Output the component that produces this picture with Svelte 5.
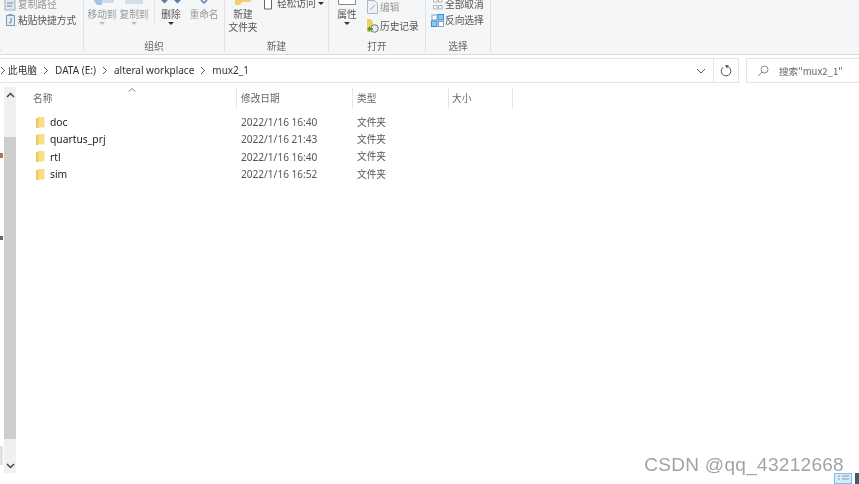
<script lang="ts">
	const files = [
		{ name: 'doc', date: '2022/1/16 16:40' },
		{ name: 'quartus_prj', date: '2022/1/16 21:43' },
		{ name: 'rtl', date: '2022/1/16 16:40' },
		{ name: 'sim', date: '2022/1/16 16:52' }
	];
	const crumbs = ['DATA (E:)', 'alteral workplace', 'mux2_1'];
</script>

<div class="window">
	<div class="ribbon">
		<section class="group clipboard">
			<div class="body stack">
				<div class="small muted"><svg width="13" height="13" viewBox="0 0 13 13"><rect x="1" y="1" width="10" height="11" fill="#dfe6ee" stroke="#9fb2c6"/><path d="M3 5h6M3 8h5" stroke="#6f8aa6"/></svg>复制路径</div>
				<div class="small"><svg width="13" height="14" viewBox="0 0 13 14"><rect x="2.500" y="2.500" width="8" height="10" fill="#e6edf5" stroke="#7f9ab5"/><rect x="4.500" y="1" width="4" height="2" fill="#7f9ab5"/><path d="M7 5v4.500l-2 .5" fill="none" stroke="#5c7f9f"/></svg>粘贴快捷方式</div>
			</div>
			<div class="label cut">剪贴板</div>
		</section>
		<section class="group organize">
			<div class="body row">
				<div class="tool muted tool-move">
					<svg width="26" height="5" viewBox="0 0 26 5"><rect x="5" y="0" width="20" height="3" fill="#cfdcea"/><path d="M5 0h8v5H8z" fill="#a9c3dc"/></svg>
					<span>移动到</span><i class="caret pale"></i>
				</div>
				<div class="tool muted tool-copy">
					<svg width="18" height="5" viewBox="0 0 18 5"><rect x="0" y="0" width="18" height="4" fill="#d3deeb"/></svg>
					<span>复制到</span><i class="caret pale"></i>
				</div>
				<div class="rule"></div>
				<div class="tool tool-del">
					<svg width="22" height="5" viewBox="0 0 22 5"><path d="M1 0l3.500 3.500L8 0zM14 0l3.500 3.500L21 0z" fill="#5b7fa6"/></svg>
					<span>删除</span><i class="caret"></i>
				</div>
				<div class="tool muted tool-ren">
					<svg width="10" height="5" viewBox="0 0 10 5"><path d="M2 0l3 3 3-3" fill="none" stroke="#5b7fa6" stroke-width="1.500"/></svg>
					<span>重命名</span>
				</div>
			</div>
			<div class="label">组织</div>
		</section>
		<section class="group create">
			<div class="body row">
				<div class="tool tool-new">
					<svg width="16" height="5" viewBox="0 0 16 5"><path d="M0 0h16v2H7L5 5H0z" fill="#f5cf6b"/></svg>
					<span>新建<br />文件夹</span>
				</div>
				<div class="small easy"><svg width="12" height="13" viewBox="0 0 12 13"><path d="M2.500 0h5l2 3v9h-7z" fill="#fff" stroke="#666"/></svg>轻松访问<i class="caret inline"></i></div>
			</div>
			<div class="label">新建</div>
		</section>
		<section class="group open">
			<div class="body row">
				<div class="tool tool-prop">
					<svg width="18" height="5" viewBox="0 0 18 5"><path d="M.5 0v4.500h17V0" fill="#fff" stroke="#8a8a8a"/></svg>
					<span>属性</span><i class="caret"></i>
				</div>
				<div class="stack open-list">
					<div class="small muted"><svg width="13" height="14" viewBox="0 0 13 14"><path d="M1.500 .5h7l3 3v10h-10z" fill="#eef2f7" stroke="#a9b8c8"/><path d="M4 10l5-5" stroke="#8aa3bd"/></svg>编辑</div>
					<div class="small"><svg width="13" height="14" viewBox="0 0 13 14"><path d="M1 0h4l2 3v10H1z" fill="#f3cf63"/><circle cx="8.500" cy="9.500" r="3.800" fill="#e8ebee" stroke="#6e7680"/><path d="M1 10l3-3v2h3v2H4v2z" fill="#3aa23a"/></svg>历史记录</div>
				</div>
			</div>
			<div class="label">打开</div>
		</section>
		<section class="group select">
			<div class="body stack">
				<div class="small"><svg width="13" height="13" viewBox="0 0 13 13"><g fill="#fff" stroke="#b4b4b4"><rect x="2.500" y="0.500" width="3.500" height="3.500"/><rect x="7.500" y="0.500" width="3.500" height="3.500"/><rect x="2.500" y="7.500" width="3.500" height="3.500"/><rect x="7.500" y="7.500" width="3.500" height="3.500"/></g></svg>全部取消</div>
				<div class="small"><svg width="13" height="13" viewBox="0 0 13 13"><rect x="1" y="1" width="5" height="5" fill="#fff" stroke="#7aa7d0"/><rect x="7" y="0.500" width="5.500" height="5.500" fill="#8fc6f2" stroke="#3f8ccb"/><rect x="0.500" y="7" width="5.500" height="5.500" fill="#8fc6f2" stroke="#3f8ccb"/><rect x="7.500" y="7.500" width="5" height="5" fill="#fff" stroke="#7aa7d0"/></svg>反向选择</div>
			</div>
			<div class="label">选择</div>
		</section>
	</div>

	<div class="navbar">
		<div class="address">
			<svg class="chev first" width="6" height="9" viewBox="0 0 6 9"><path d="M1 1l3.500 3.500L1 8" /></svg>
			<span class="root">此电脑</span>
			{#each crumbs as crumb}
				<svg class="chev" width="6" height="9" viewBox="0 0 6 9"><path d="M1 1l3.500 3.500L1 8" /></svg>
				<span>{crumb}</span>
			{/each}
			<div class="address-end">
				<svg class="drop" width="10" height="6" viewBox="0 0 10 6"><path d="M1 1l4 4 4-4" /></svg>
				<div class="refresh">
					<svg width="12" height="12" viewBox="0 0 12 12"><path d="M3.200 2.200A4.800 4.800 0 1 0 8 1.700" /><path d="M8.800 0L4.800 0.200 7 3.400" class="thin" /></svg>
				</div>
			</div>
		</div>
		<div class="search">
			<svg width="12" height="12" viewBox="0 0 12 12"><circle cx="7.500" cy="4.500" r="3.500" /><path d="M5 7l-4 4" /></svg>
			<span>搜索"mux2_1"</span>
		</div>
	</div>

	<div class="content">
		<div class="edge">
			<span class="nub one"></span>
			<span class="nub two"></span>
			<span class="nub three"></span>
		</div>
		<div class="scrollbar">
			<svg width="9" height="6" viewBox="0 0 9 6"><path d="M1 5l3.500-3.500L8 5" /></svg>
			<div class="thumb"></div>
			<svg width="9" height="6" viewBox="0 0 9 6"><path d="M1 1l3.500 3.500L8 1" /></svg>
		</div>
		<div class="list">
			<div class="head">
				<div class="col name">名称<svg class="sort" width="8" height="4" viewBox="0 0 8 4"><path d="M.5 3.500L4 .5l3.500 3" /></svg></div>
				<div class="col date">修改日期</div>
				<div class="col type">类型</div>
				<div class="col size">大小</div>
			</div>
			{#each files as file}
				<div class="file">
					<div class="file-name">
						<svg width="9" height="11" viewBox="0 0 9 11"><path d="M2 0h6.500v10.500H2z" fill="#f9de8a" /><path d="M0 1h2.500v10H0z" fill="#f3c95c" /></svg>
						<span>{file.name}</span>
					</div>
					<div class="file-date">{file.date}</div>
					<div class="file-type">文件夹</div>
				</div>
			{/each}
		</div>
	</div>

	<div class="watermark">CSDN @qq_43212668</div>
	<div class="views">
		<span class="view on">
			<svg width="16" height="8" viewBox="0 0 16 8"><path d="M3 2h2M7 2h7M3 5h2M7 5h7" stroke="#8f9aa3" fill="none" /></svg>
		</span>
		<span class="view tile"></span>
	</div>
</div>

<style>
	:global(body) {
		margin: 0;
		background: #fff;
	}

	.window {
		position: relative;
		width: 859px;
		height: 484px;
		overflow: hidden;
		background: #fff;
		font-family: "Noto Sans CJK SC", "Noto Sans", sans-serif;
		font-size: 9.700px;
		color: #444;
		filter: blur(0.35px);
	}

	.ribbon {
		display: flex;
		height: 54px;
		background: #f5f6f7;
		border-bottom: 1px solid #dcdcdc;
	}

	.group {
		display: flex;
		flex-direction: column;
		height: 52px;
		box-sizing: border-box;
		border-right: 1px solid #e1e2e3;
		flex: none;
	}

	.clipboard {
		width: 84px;
	}

	.organize {
		width: 141px;
	}

	.create {
		width: 104px;
	}

	.open {
		width: 97px;
	}

	.select {
		width: 65px;
	}

	.body {
		height: 39px;
		flex: none;
		overflow: hidden;
	}

	.label {
		padding-top: 1px;
		text-align: center;
		line-height: 12px;
		color: #666;
		white-space: nowrap;
	}

	.label.cut {
		text-align: left;
		margin-left: -28px;
	}

	.row {
		display: flex;
	}

	.stack {
		display: flex;
		flex-direction: column;
		padding-left: 4px;
		box-sizing: border-box;
	}

	.stack > :first-child {
		margin-top: -4px;
	}

	.select .stack {
		padding-left: 5px;
	}

	.small {
		display: flex;
		align-items: center;
		gap: 1px;
		height: 16px;
		white-space: nowrap;
		flex: none;
		color: #555;
	}

	.muted,
	.small.muted {
		color: #999;
	}

	.tool {
		display: flex;
		flex-direction: column;
		align-items: center;
		flex: none;
		text-align: center;
		line-height: 13px;
		white-space: nowrap;
		color: #555;
	}

	.tool.muted {
		color: #999;
	}

	.tool span {
		margin-top: 3px;
	}

	.tool-move {
		width: 34px;
		margin-left: 1px;
	}

	.tool-copy {
		width: 30px;
	}

	.rule {
		width: 1px;
		height: 24px;
		flex: none;
		background: #e3e3e3;
		margin-left: 5px;
	}

	.tool-del {
		width: 32px;
	}

	.tool-ren {
		width: 32px;
		margin-left: 1px;
	}

	.tool-new {
		width: 36px;
	}

	.easy {
		margin-top: -5px;
		margin-left: 1px;
		gap: 3px;
	}

	.tool-prop {
		width: 36px;
	}

	.open-list {
		padding-left: 1px;
	}

	.open-list > :first-child {
		margin-top: -1px;
	}

	.open-list > :last-child {
		margin-top: 3px;
	}

	.caret {
		display: block;
		width: 0;
		height: 0;
		margin-top: 1px;
		border-left: 3px solid transparent;
		border-right: 3px solid transparent;
		border-top: 3px solid #333;
	}

	.caret.pale {
		border-top-color: #bbb;
	}

	.caret.inline {
		margin: 0 0 0 -1px;
	}

	.navbar {
		display: flex;
		height: 25px;
		margin-top: 3px;
		gap: 7px;
	}

	.address {
		display: flex;
		align-items: center;
		width: 739px;
		flex: none;
		box-sizing: border-box;
		border: 1px solid #e4e4e4;
		border-left: 0;
		font-family: "Noto Sans", "Noto Sans CJK SC", sans-serif;
		color: #333;
		font-size: 10px;
	}

	.address > span {
		margin-bottom: 1px;
	}

	.root {
		font-family: "Noto Sans CJK SC", sans-serif;
		font-size: 9.700px;
	}

	.chev {
		flex: none;
		fill: none;
		stroke: #555;
		margin: 0 6px;
	}

	.chev.first {
		margin: 0 2px 0 0;
	}

	.address-end {
		display: flex;
		align-items: center;
		margin-left: auto;
		height: 100%;
	}

	.drop {
		fill: none;
		stroke: #555;
		margin-right: 7px;
	}

	.refresh {
		display: flex;
		align-items: center;
		justify-content: center;
		width: 25px;
		height: 100%;
		box-sizing: border-box;
		border-left: 1px solid #e4e4e4;
	}

	.refresh svg,
	.search svg {
		fill: none;
		stroke: #555;
	}

	.refresh .thin {
		fill: #555;
		stroke: none;
	}

	.search {
		display: flex;
		align-items: center;
		flex: 1;
		padding-left: 10px;
		gap: 10px;
		box-sizing: border-box;
		border: 1px solid #e4e4e4;
		border-right: 0;
		color: #666;
		font-size: 9.600px;
	}

	.search svg {
		stroke: #888;
	}

	.content {
		display: flex;
		height: 401px;
	}

	.edge {
		position: relative;
		width: 4px;
		flex: none;
	}

	.nub {
		position: absolute;
		left: 0;
		width: 3px;
	}

	.nub.one {
		top: 70px;
		height: 5px;
		background: #a8795a;
	}

	.nub.two {
		top: 153px;
		height: 4px;
		background: #666;
	}

	.nub.three {
		top: 363px;
		height: 19px;
		background: #e2e2e2;
	}

	.scrollbar {
		display: flex;
		flex-direction: column;
		align-items: center;
		width: 12px;
		height: 386px;
		margin-top: 4px;
		flex: none;
		background: #f0f0f0;
		padding: 5px 0 4px;
		box-sizing: border-box;
	}

	.scrollbar svg {
		flex: none;
		fill: none;
		stroke: #444;
		stroke-width: 1.500;
	}

	.thumb {
		width: 100%;
		height: 302px;
		margin: 39px 0 auto;
		background: #cdcdcd;
	}

	.list {
		flex: 1;
		padding-left: 1px;
	}

	.head {
		display: flex;
		height: 20px;
		margin-top: 5px;
		margin-bottom: 5.500px;
		color: #666;
	}

	.col {
		position: relative;
		display: flex;
		align-items: center;
		box-sizing: border-box;
		border-right: 1px solid #e5e5e5;
		padding: 0 0 0 4px;
	}

	.col.name {
		width: 220px;
		padding-left: 16px;
	}

	.col.date {
		width: 116px;
	}

	.col.type {
		width: 96px;
	}

	.col.size {
		width: 64px;
		padding-left: 3px;
	}

	.sort {
		position: absolute;
		top: 0;
		left: 111px;
		fill: none;
		stroke: #888;
	}

	.file {
		display: flex;
		align-items: center;
		height: 17.300px;
		color: #555;
	}

	.file-name {
		display: flex;
		align-items: center;
		width: 220px;
		padding-left: 19px;
		gap: 5px;
		box-sizing: border-box;
		color: #222;
		font-family: "Noto Sans", sans-serif;
		font-size: 10.300px;
	}

	.file-date {
		width: 116px;
		padding-left: 4px;
		box-sizing: border-box;
		font-family: "Noto Sans", sans-serif;
		font-size: 10.100px;
	}

	.file-type {
		padding: 0 0 1px 4px;
	}

	.watermark {
		position: absolute;
		right: 15px;
		bottom: 7px;
		font-family: "Liberation Sans", sans-serif;
		font-size: 19px;
		line-height: 24px;
		letter-spacing: 0.300px;
		color: #a3a3a3;
	}

	.views {
		position: absolute;
		left: 834px;
		top: 473px;
		display: flex;
		gap: 3px;
	}

	.view {
		display: block;
		height: 11px;
		box-sizing: border-box;
	}

	.view svg {
		display: block;
	}

	.view.on {
		width: 18px;
		border: 1px solid #7cc0ea;
		background: #d4ebf9;
	}

	.view.tile {
		width: 4px;
		background: #3d5c6e;
	}
</style>
